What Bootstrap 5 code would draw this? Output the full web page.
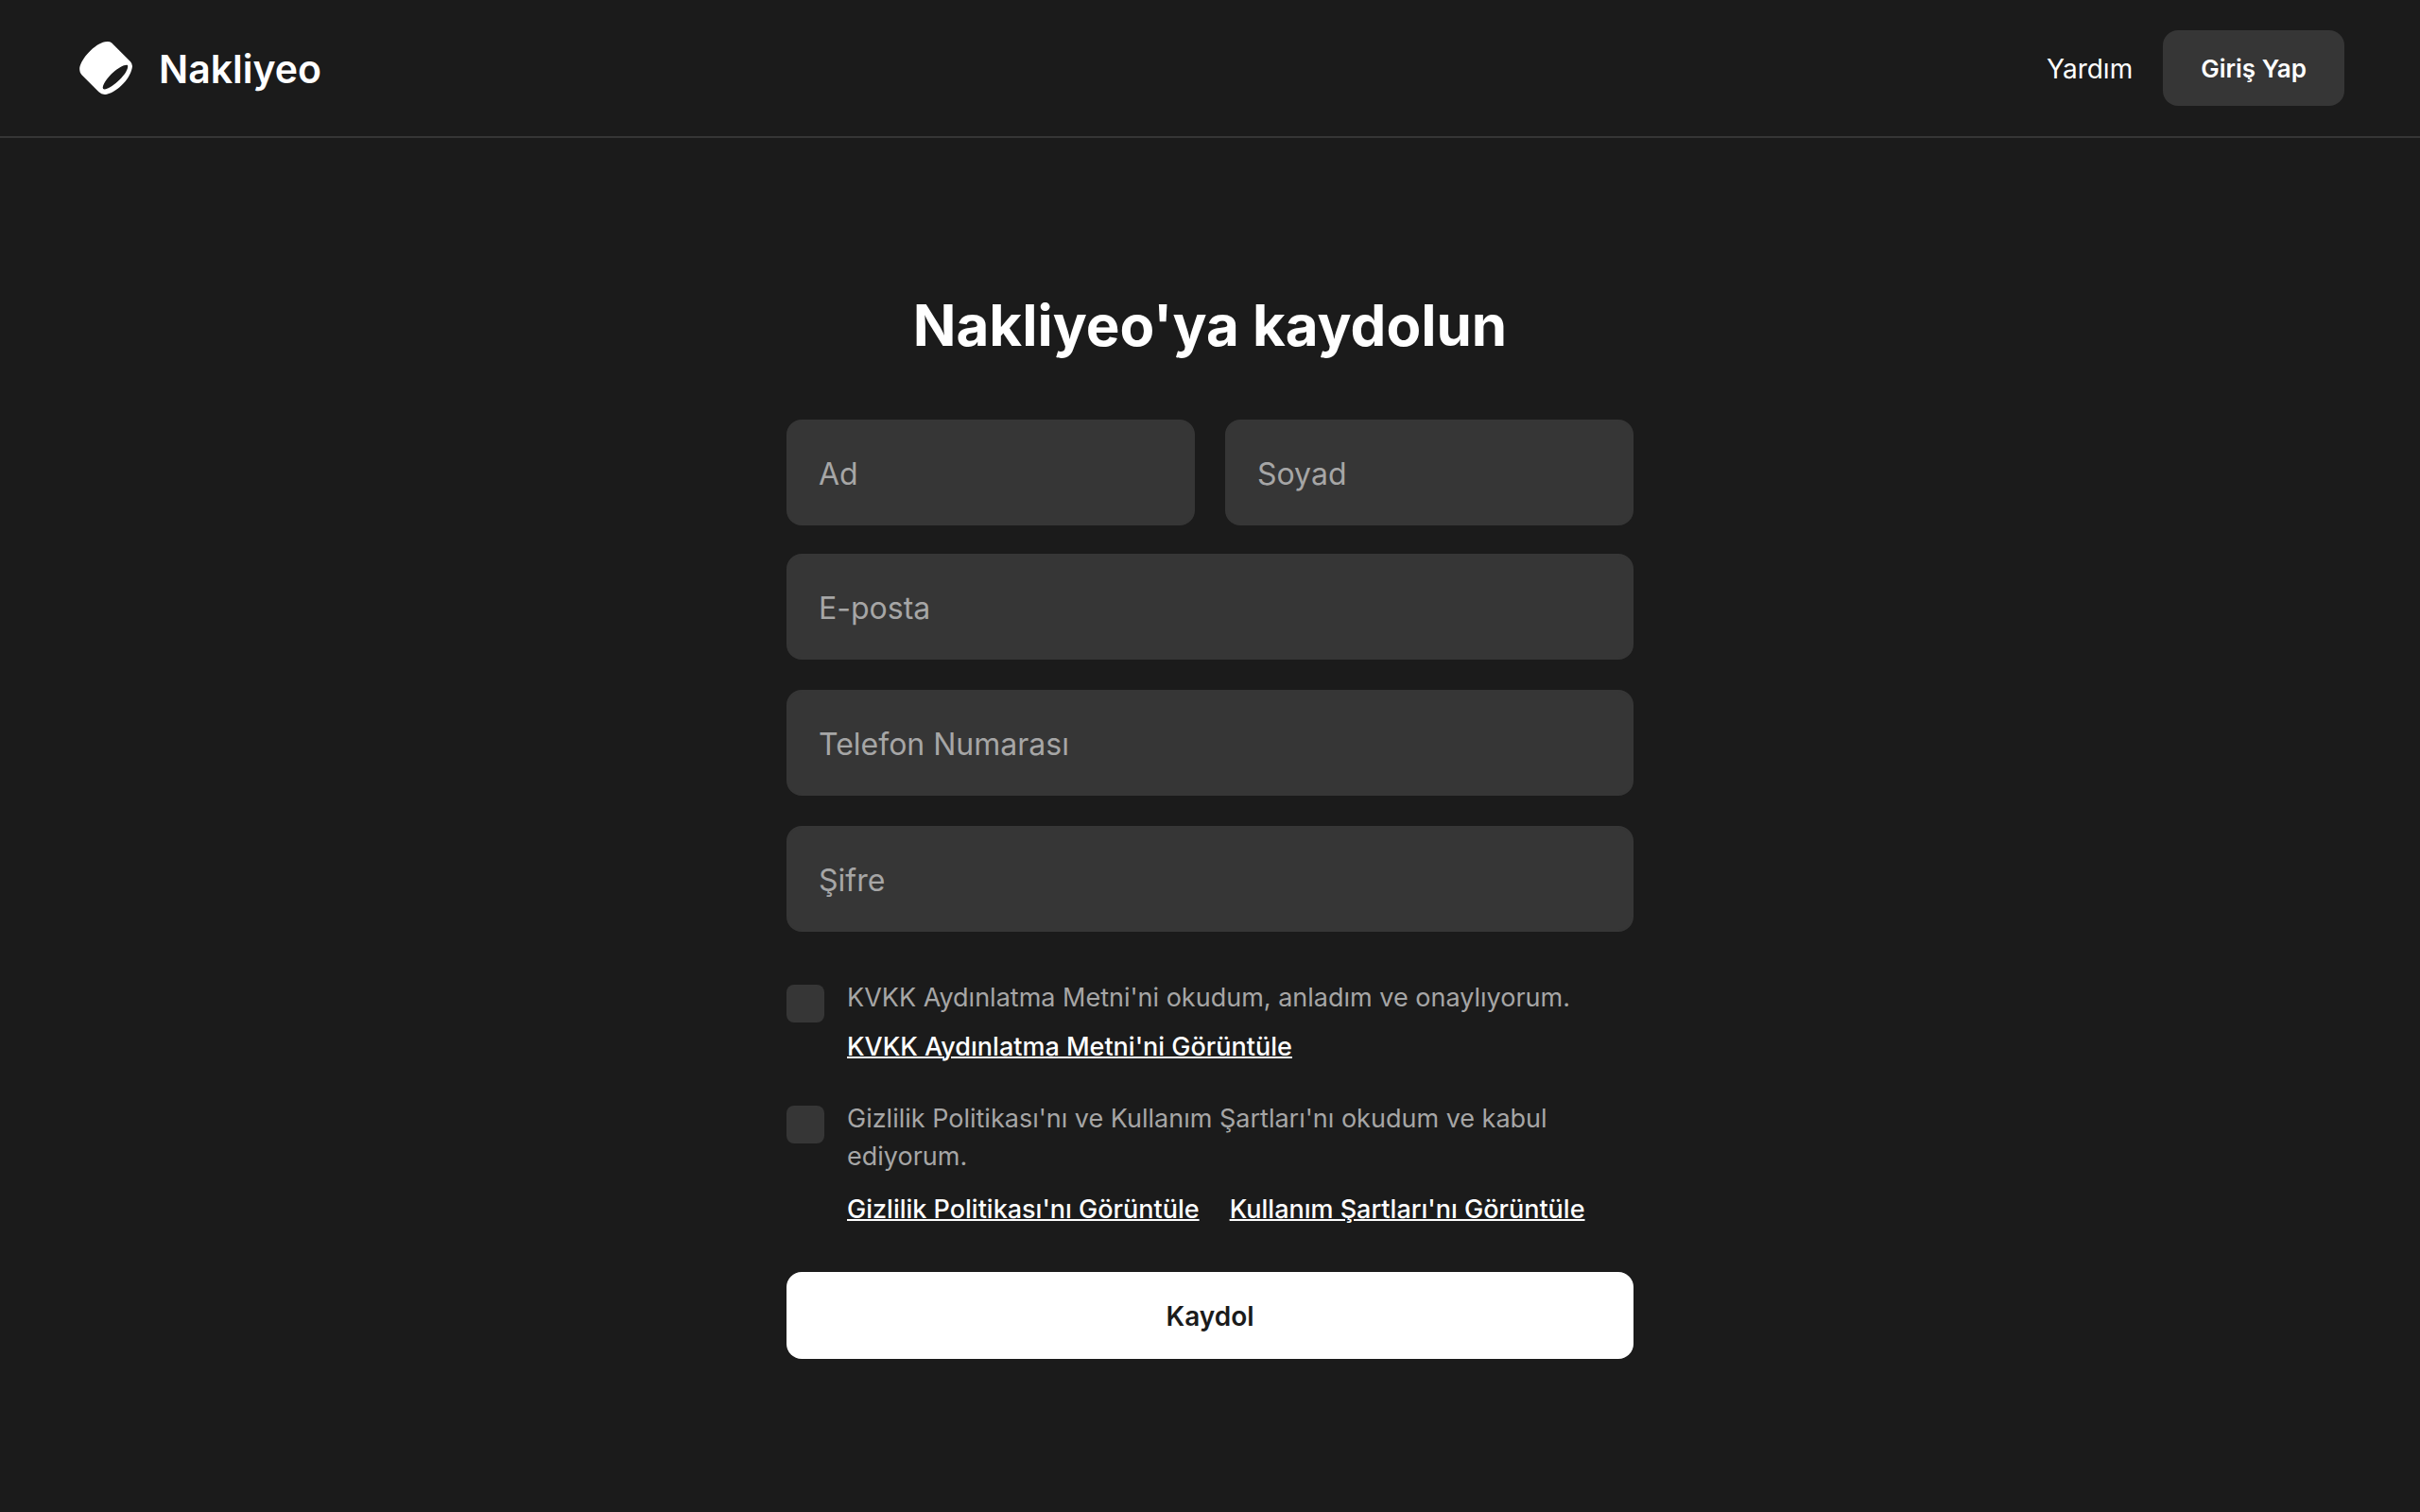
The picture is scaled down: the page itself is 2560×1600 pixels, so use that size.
<!DOCTYPE html>
<html lang="tr">
<head>
<meta charset="utf-8">
<meta name="viewport" content="width=device-width, initial-scale=1">
<title>Nakliyeo - Kaydol</title>
<link href="https://cdn.jsdelivr.net/npm/bootstrap@5.3.0/dist/css/bootstrap.min.css" rel="stylesheet">
<style>
  body { background: #1b1b1b; color: #fff; font-family: Inter, "Noto Sans", sans-serif; font-size: 28px; line-height: 40px; }
  .site-header { border-bottom: 2px solid #363636; padding: 32px 80px; }
  .brand-name { font-size: 41px; line-height: 48px; font-weight: 600; padding-top: 2px; }
  .brand-icon { width: 64px; height: 64px; }
  .header-actions { gap: 32px; }
  .help-link { padding-top: 2px; }
  .btn-login { background: #363636; color: #fff; border: 0; border-radius: 16px; padding: 21px 40px 19px; font-size: 26px; line-height: 40px; font-weight: 600; }
  .btn-login:hover { background: #444; color: #fff; }
  .signup { width: 100%; max-width: 896px; padding-top: 158px; }
  .signup-title { font-size: 60px; line-height: 80px; font-weight: 700; margin-bottom: 60px; }
  .signup-fields { gap: 32px; }
  .signup-names { gap: 32px; margin-bottom: -2px; }
  .form-floating > .form-control.field { background: #363636; color: #fff; border: 2px solid #363636; border-radius: 16px; height: 112px; padding: 44px 32px 12px; font-size: 32px; line-height: 48px; }
  .form-floating > .field-label { color: #a6a6a6; font-size: 32px; line-height: 48px; padding: 32px 32px 28px; border: 2px solid transparent; }
  .form-floating > .form-control:focus ~ .field-label,
  .form-floating > .form-control:not(:placeholder-shown) ~ .field-label { color: #a6a6a6; transform: scale(.7) translate(14px, -20px); }
  .consents { margin-top: 50px; gap: 36px; }
  .consent-row { gap: 24px; font-size: 27px; }
  .form-check-input.tick { width: 40px; height: 40px; margin: 6px 0 0; background-color: #363636; border: 0; border-radius: 8px; }
  .form-check-input.tick:checked { background-color: #0d6efd; }
  .consent-text { display: block; color: #a6a6a6; }
  .consent-links { gap: 32px; margin-top: 12px; }
  .consent-links.pair { margin-top: 16px; }
  .consent-links a { color: #fff; font-weight: 500; text-decoration-thickness: 2px; }
  .btn-signup { background: #fff; color: #1b1b1b; border: 0; border-radius: 16px; padding: 27px 26px 25px; font-size: 28px; line-height: 40px; font-weight: 600; margin-top: 46px; }
  .btn-signup:hover { background: #e6e6e6; }
</style>
</head>
<body>
<header class="site-header d-flex align-items-center justify-content-between">
  <a href="#" class="d-flex align-items-center gap-4 text-white text-decoration-none">
    <svg class="brand-icon" viewBox="0 0 64 64" aria-hidden="true">
      <path fill="#fff" fill-rule="evenodd" d="M38 5.300L58 25.200Q60 27.300 60 30C59 42 45 57 33 59.700Q28 60.800 24.500 57.300L6.500 39.300Q4 36.700 4.200 32C6 22 20 6.500 31 4.300Q35.500 3.300 38 5.300ZM54.500 28.800C48 28 31 42 28.700 52.500Q28.500 54.600 31 54.400C40 52.500 55 38 55.200 30.500Q55.400 29 54.500 28.800Z"/>
    </svg>
    <span class="brand-name">Nakliyeo</span>
  </a>
  <nav class="header-actions d-flex align-items-center">
    <a href="#" class="help-link text-white text-decoration-none">Yardım</a>
    <button type="button" class="btn btn-login">Giriş Yap</button>
  </nav>
</header>
<main class="d-flex justify-content-center">
  <form class="signup">
    <h1 class="signup-title text-center">Nakliyeo'ya kaydolun</h1>
    <div class="signup-fields d-flex flex-column">
      <div class="signup-names d-flex">
        <div class="form-floating flex-fill">
          <input class="form-control field" id="ad" type="text" placeholder=" ">
          <label class="field-label" for="ad">Ad</label>
        </div>
        <div class="form-floating flex-fill">
          <input class="form-control field" id="soyad" type="text" placeholder=" ">
          <label class="field-label" for="soyad">Soyad</label>
        </div>
      </div>
      <div class="form-floating">
        <input class="form-control field" id="eposta" type="email" placeholder=" ">
        <label class="field-label" for="eposta">E-posta</label>
      </div>
      <div class="form-floating">
        <input class="form-control field" id="telefon" type="tel" placeholder=" ">
        <label class="field-label" for="telefon">Telefon Numarası</label>
      </div>
      <div class="form-floating">
        <input class="form-control field" id="sifre" type="password" placeholder=" ">
        <label class="field-label" for="sifre">Şifre</label>
      </div>
    </div>
    <div class="consents d-flex flex-column">
      <div class="consent-row d-flex">
        <input class="form-check-input tick flex-shrink-0" type="checkbox" id="kvkk">
        <div>
          <label class="consent-text" for="kvkk">KVKK Aydınlatma Metni'ni okudum, anladım ve onaylıyorum.</label>
          <div class="consent-links d-flex"><a href="#">KVKK Aydınlatma Metni'ni Görüntüle</a></div>
        </div>
      </div>
      <div class="consent-row d-flex">
        <input class="form-check-input tick flex-shrink-0" type="checkbox" id="kosullar">
        <div>
          <label class="consent-text" for="kosullar">Gizlilik Politikası'nı ve Kullanım Şartları'nı okudum ve kabul ediyorum.</label>
          <div class="consent-links pair d-flex"><a href="#">Gizlilik Politikası'nı Görüntüle</a><a href="#">Kullanım Şartları'nı Görüntüle</a></div>
        </div>
      </div>
    </div>
    <button type="submit" class="btn btn-signup w-100">Kaydol</button>
  </form>
</main>
<script src="https://cdn.jsdelivr.net/npm/bootstrap@5.3.0/dist/js/bootstrap.bundle.min.js"></script>
</body>
</html>
